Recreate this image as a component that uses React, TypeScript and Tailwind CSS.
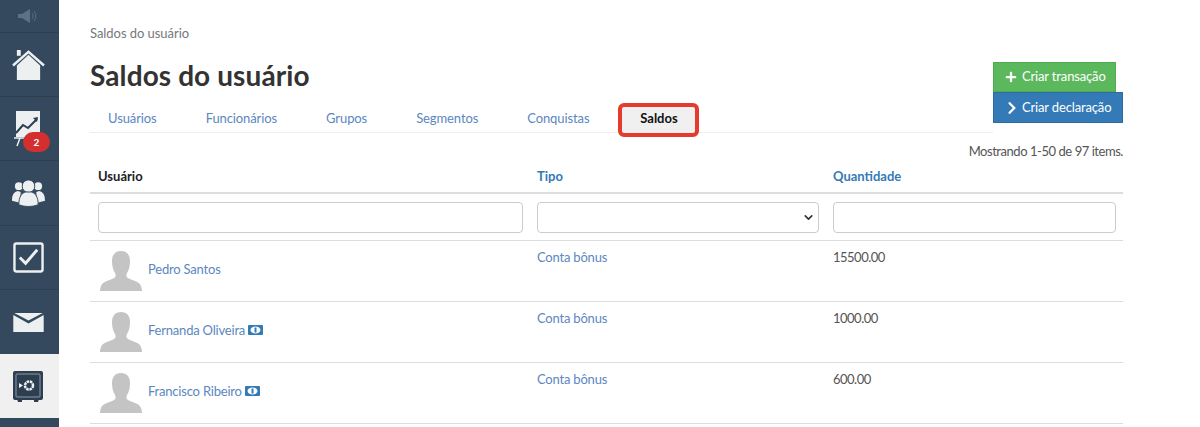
import { FaPlus, FaChevronRight } from "react-icons/fa";
import { LuChevronDown } from "react-icons/lu";

const Avatar = () => (
  <svg width="42" height="40" viewBox="0 0 42 40" className="shrink-0">
    <path fill="#c4c4c4" d="M21 0c6 0 9 4 9 10 0 5-1 9-3 12-1 2-1 4 1 5 5 3 11 3 13 8 .6 2 .9 3 1 5H0c.1-2 .4-3 1-5 2-5 8-5 13-8 2-1 2-3 1-5-2-3-3-7-3-12 0-6 3-10 9-10z" />
  </svg>
);

const BillIcon = () => (
  <svg width="15" height="10" viewBox="0 0 15 10" className="shrink-0">
    <rect width="15" height="10" rx="1" fill="#337ab7" />
    <ellipse cx="7.500" cy="5" rx="5" ry="3.500" fill="#ffffff" />
    <rect x="6.500" y="2.500" width="2" height="5" fill="#337ab7" />
  </svg>
);

const rows = [
  { name: "Pedro Santos", amount: "15500.00", bill: false },
  { name: "Fernanda Oliveira", amount: "1000.00", bill: true },
  { name: "Francisco Ribeiro", amount: "600.00", bill: true },
];

const tabs = ["Usuários", "Funcionários", "Grupos", "Segmentos", "Conquistas"];

const Sidebar = () => (
  <div className="w-[59px] h-[427px] shrink-0 bg-[#34495e] flex flex-col overflow-hidden">
    <div className="h-[33px] shrink-0 pr-[3px] flex items-center justify-center border-b border-[#2c3e50]">
      <svg width="20" height="14" viewBox="0 0 20 14">
        <path fill="#5d7186" d="M0 5h4l8-5v14l-8-5H0z" />
        <path fill="none" stroke="#5d7186" d="M14 4c1.500 2 1.500 4 0 6M16 2c2.500 3 2.500 7 0 10" />
      </svg>
    </div>
    <div className="h-[64px] shrink-0 pr-[3px] flex items-center justify-center border-b border-[#2c3e50]">
      <svg width="33" height="31" viewBox="0 0 34 32">
        <path fill="#ecf0f1" d="M5 17 17 6l12 11v15H5z" />
        <path fill="none" stroke="#ecf0f1" strokeWidth="2.500" d="M1 17 17 3l16 14" />
        <path fill="#ecf0f1" d="M5 1h4v6H5z" />
      </svg>
    </div>
    <div className="h-[64px] shrink-0 relative pr-[3px] flex items-center justify-center border-b border-[#2c3e50]">
      <svg width="28" height="36" viewBox="0 0 28 36" className="-ml-[4px]">
        <path fill="#ecf0f1" d="M4 0h24v26H4z" />
        <path fill="none" stroke="#2c3e50" strokeWidth="2" d="M4 22l7-8 5 3 9-9" />
        <path fill="#2c3e50" d="M26 6l-5 1 4 4z" />
        <path fill="none" stroke="#ecf0f1" strokeWidth="1.500" d="M2 27h12M8 27l-3 8" />
      </svg>
      <span className="absolute left-[23px] top-[35px] w-[27px] h-[20px] rounded-full bg-[#d32f2f] text-white text-[10px] font-bold flex items-center justify-center">2</span>
    </div>
    <div className="h-[65px] shrink-0 pr-[3px] flex items-center justify-center border-b border-[#2c3e50]">
      <svg width="33" height="28" viewBox="0 0 34 28">
        <circle cx="7" cy="7" r="4" fill="#ecf0f1" />
        <circle cx="27" cy="7" r="4" fill="#ecf0f1" />
        <path fill="#ecf0f1" d="M0 22c0-6 2-9 6-10l3 1-1 11zM34 22c0-6-2-9-6-10l-3 1 1 11z" />
        <circle cx="17" cy="7" r="6.500" fill="#ecf0f1" stroke="#34495e" />
        <path fill="#ecf0f1" stroke="#34495e" d="M7 26c0-8 3-12 7-13h6c4 1 7 5 7 13-6 2.500-14 2.500-20 0z" />
      </svg>
    </div>
    <div className="h-[64px] shrink-0 pr-[3px] flex items-center justify-center border-b border-[#2c3e50]">
      <svg width="31" height="31" viewBox="0 0 32 32">
        <rect x="1.500" y="1.500" width="29" height="29" rx="2" fill="none" stroke="#ecf0f1" strokeWidth="2.500" />
        <path fill="none" stroke="#ecf0f1" strokeWidth="3" d="M7 16l6 6 12-14" />
      </svg>
    </div>
    <div className="h-[64px] shrink-0 pr-[3px] flex items-center justify-center">
      <svg width="31" height="19" viewBox="0 0 32 20">
        <path fill="#ecf0f1" d="M0 2 16 11 32 2v18H0zM1 0h30L16 8z" />
      </svg>
    </div>
    <div className="h-[64px] shrink-0 pr-[4px] flex items-center justify-center bg-[#f0f0f0]">
      <svg width="30" height="31" viewBox="0 0 30 31">
        <path fill="#2c3e50" d="M4 28h5v3H5zM21 28h5l-1 3h-4z" />
        <rect width="30" height="29" rx="2" fill="#2c3e50" />
        <rect x="3" y="3" width="24" height="23" rx="1" fill="none" stroke="#8a9aa8" />
        <circle cx="16" cy="14.500" r="4" fill="none" stroke="#ecf0f1" strokeWidth="2.500" strokeDasharray="2.500 0.700" />
        <path fill="#ecf0f1" d="M6 12l4 2.500L6 17z" />
      </svg>
    </div>
  </div>
);

export default function App() {
  return (
    <div className="flex h-[427px] overflow-hidden bg-white font-['Lato',sans-serif] text-[13px] text-[#555]">
      <Sidebar />
      <div className="w-[1033px] ml-[31px] relative">
        <p className="pt-[26px] leading-[15px] text-[#777] tracking-[-0.05px]">Saldos do usuário</p>
        <h1 className="mt-[18px] text-[28px] leading-[32px] font-bold text-[#333] tracking-[0.1px]">Saldos do usuário</h1>

        <div className="absolute left-[903px] top-[62px] w-[130px]">
          <button className="flex items-center pl-[11px] gap-[5px] w-[123px] h-[30px] bg-[#5cb85c] border border-[#4cae4c] text-white text-[13px] tracking-[-0.15px]">
            <FaPlus size={12} />
            Criar transação
          </button>
          <button className="flex items-center pl-[11px] gap-[3px] w-[130px] h-[31px] bg-[#337ab7] border border-[#2e6da4] text-white text-[13px] tracking-[-0.15px]">
            <FaChevronRight size={14} />
            Criar declaração
          </button>
        </div>

        <div className="mt-[11px] w-[903px] h-[31px] flex items-start border-b border-[#eeeeee]">
          <div className="flex pl-[18px] gap-[49px] pt-[8px] leading-[16px] text-[#5b87bf] tracking-[-0.1px]">
            {tabs.map((t) => (
              <a key={t}>{t}</a>
            ))}
          </div>
          <div className="ml-[29px] mt-[1px] relative z-10 w-[81px] h-[34px] pb-[3px] flex items-center justify-center rounded-[6px] border-[4px] border-[#e53a2e] bg-[#f0f0f0] font-bold text-[#111]">
            Saldos
          </div>
        </div>

        <p className="mt-[11px] text-right leading-[15px] text-[#555] tracking-[-0.45px]">Mostrando 1-50 de 97 items.</p>

        <div className="grid grid-cols-[439px_296px_298px] font-bold h-[28px] mt-[7px] border-b-2 border-[#dddddd] leading-[16px] pt-[2px]">
          <div className="pl-[8px] text-[#222]">Usuário</div>
          <div className="pl-[8px] text-[#337ab7]">Tipo</div>
          <div className="pl-[8px] text-[#337ab7]">Quantidade</div>
        </div>

        <div className="grid grid-cols-[439px_296px_298px] h-[47px] pt-[8px] border-b border-[#dddddd]">
          <div className="px-[8px]"><div className="w-[425px] h-[31px] border border-[#cccccc] rounded-[4px]" /></div>
          <div className="px-[8px]">
            <div className="w-[282px] h-[31px] border border-[#cccccc] rounded-[4px] flex items-center justify-end pr-[3px]">
              <LuChevronDown size={13} strokeWidth={3} className="text-[#333]" />
            </div>
          </div>
          <div className="px-[8px]"><div className="w-[283px] h-[31px] border border-[#cccccc] rounded-[4px]" /></div>
        </div>

        {rows.map((r) => (
          <div key={r.name} className="grid grid-cols-[439px_296px_298px] h-[61px] border-b border-[#dddddd]">
            <div className="pl-[10px] pt-[10px] flex items-start gap-[6px]">
              <Avatar />
              <div className="mt-[10px] flex items-center gap-[3px] leading-[16px] text-[#5b87bf] tracking-[-0.2px]">
                <a>{r.name}</a>
                {r.bill && <BillIcon />}
              </div>
            </div>
            <div className="pl-[8px] pt-[8px] leading-[16px] text-[#5b87bf] tracking-[-0.2px]">Conta bônus</div>
            <div className="pl-[8px] pt-[8px] leading-[16px] tracking-[-0.5px]">{r.amount}</div>
          </div>
        ))}
      </div>
    </div>
  );
}
